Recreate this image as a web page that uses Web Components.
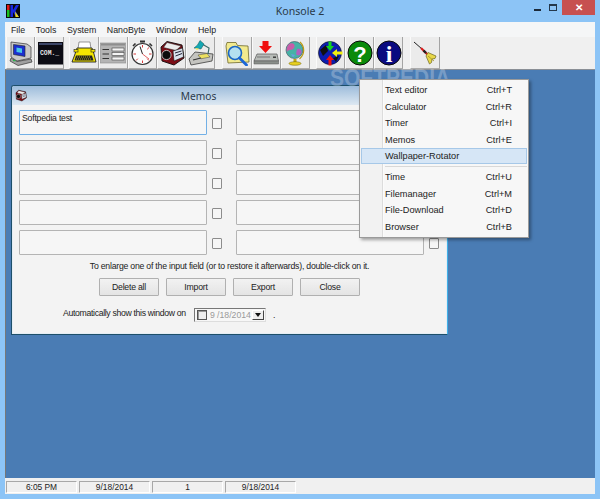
<!DOCTYPE html>
<html>
<head>
<meta charset="utf-8">
<title>Konsole 2</title>
<style>
    html, body { margin: 0; padding: 0; background: #8cc4f6; }
    body { font-family: "Liberation Sans", Arial, sans-serif; font-size: 9.2px; color: #222; }
</style>
</head>
<body>
<konsole-app>
    <tool-bar slot="toolbar">
        <tool-button icon="computer"></tool-button>
        <tool-button icon="com"></tool-button>
        <tool-gap size="5"></tool-gap>
        <tool-button icon="typewriter"></tool-button>
        <tool-button icon="form"></tool-button>
        <tool-button icon="stopwatch"></tool-button>
        <tool-button icon="memos"></tool-button>
        <tool-button icon="lamp"></tool-button>
        <tool-gap size="7"></tool-gap>
        <tool-button icon="folder"></tool-button>
        <tool-button icon="download"></tool-button>
        <tool-button icon="globe"></tool-button>
        <tool-gap size="6"></tool-gap>
        <tool-button icon="arrows"></tool-button>
        <tool-button icon="help"></tool-button>
        <tool-button icon="info"></tool-button>
        <tool-gap size="7"></tool-gap>
        <tool-button icon="dart"></tool-button>
    </tool-bar>

    <memo-window slot="desktop" heading="Memos">
        <memo-row first="Softpedia test" focused></memo-row>
        <memo-row></memo-row>
        <memo-row></memo-row>
        <memo-row></memo-row>
        <memo-row></memo-row>
    </memo-window>

    <context-menu slot="desktop">
        <menu-item shortcut="Ctrl+T">Text editor</menu-item>
        <menu-item shortcut="Ctrl+R">Calculator</menu-item>
        <menu-item shortcut="Ctrl+I">Timer</menu-item>
        <menu-item shortcut="Ctrl+E">Memos</menu-item>
        <menu-item active>Wallpaper-Rotator</menu-item>
        <menu-separator></menu-separator>
        <menu-item shortcut="Ctrl+U">Time</menu-item>
        <menu-item shortcut="Ctrl+M">Filemanager</menu-item>
        <menu-item shortcut="Ctrl+D">File-Download</menu-item>
        <menu-item shortcut="Ctrl+B">Browser</menu-item>
    </context-menu>

    <status-panel slot="status">6:05 PM</status-panel>
    <status-panel slot="status">9/18/2014</status-panel>
    <status-panel slot="status">1</status-panel>
    <status-panel slot="status">9/18/2014</status-panel>
</konsole-app>

<script>
const ICONS = {
    computer: `
        <path d="M3 2 L19 4 L23 7 L23 18 L9 21 L3 17 Z" fill="#c8c8c8" stroke="#333" stroke-width=".7"/>
        <path d="M5.5 4.5 L17 6 L17 16.5 L5.5 14.5 Z" fill="#1a2fd0" stroke="#222" stroke-width=".6"/>
        <path d="M8.5 7.5 L14 8.5 L14 13 L8.5 12 Z" fill="#47c6e8"/>
        <path d="M3 18 L9 21.5 L23 19 L24 22 L10 25.5 L2 21 Z" fill="#a0a0a0" stroke="#333" stroke-width=".7"/>
        <rect x="5" y="20" width="2.5" height="1.2" fill="#2bb54a"/>`,
    com: `
        <rect x="1" y="2" width="25" height="22.5" fill="#0c0c14"/>
        <rect x="2" y="3" width="23" height="2" fill="#3c4668"/>
        <text x="3" y="14.5" font-family="Liberation Mono, monospace" font-size="6.4" font-weight="700" fill="#e8e8e8">COM._</text>`,
    typewriter: `
        <path d="M8 2 L19 2 L20 9 L7 9 Z" fill="#fff" stroke="#555" stroke-width=".6"/>
        <path d="M6 8 L21 8 L23 14 L25 22 L1 22 L4 14 Z" fill="#f4e500" stroke="#222" stroke-width=".9"/>
        <rect x="3" y="9.5" width="4" height="2.5" fill="#f4e500" stroke="#222" stroke-width=".6"/>
        <rect x="20" y="9.5" width="4" height="2.5" fill="#f4e500" stroke="#222" stroke-width=".6"/>
        <path d="M5 15.5 L21 15.5 L22.5 20.5 L3.5 20.5 Z" fill="#222"/>
        <path d="M6 17 H20 M5 19 H21" stroke="#f4e500" stroke-width=".7" stroke-dasharray="1 1"/>`,
    form: `
        <rect x="0" y="3" width="26" height="20" fill="#b4b4b4" stroke="#8a8a8a" stroke-width=".6"/>
        <rect x="1" y="3.5" width="24" height="2" fill="#8e8e8e"/>
        <path d="M2.5 9.5 H9 M2.5 14 H9 M2.5 18.5 H9" stroke="#333" stroke-width="1.1"/>
        <rect x="12" y="8" width="12" height="3" fill="#f4f4f4" stroke="#444" stroke-width=".6"/>
        <rect x="12" y="12.5" width="12" height="3" fill="#f4f4f4" stroke="#444" stroke-width=".6"/>
        <rect x="12" y="17" width="12" height="3" fill="#f4f4f4" stroke="#444" stroke-width=".6"/>`,
    stopwatch: `
        <rect x="11" y="0.5" width="5" height="2" fill="#333"/>
        <rect x="12.5" y="2" width="2" height="2.5" fill="#777"/>
        <path d="M4 6 L6.5 3.5 M23 6 L20.5 3.5" stroke="#333" stroke-width="1.6"/>
        <circle cx="13.5" cy="14" r="10.5" fill="#fdfdfd" stroke="#333" stroke-width="1.2"/>
        <path d="M13.5 5 V7.5 M22.5 14 H20 M13.5 23 V20.5 M4.5 14 H7 M20 7.5 L18.2 9.3 M20 20.5 L18.2 18.7 M7 20.5 L8.8 18.7" stroke="#d83a3a" stroke-width="1"/>
        <path d="M13.5 14 L11 6.5" stroke="#222" stroke-width="1"/>
        <path d="M13.5 14 L20 19" stroke="#d83a3a" stroke-width=".8"/>`,
    memos: `
        <path d="M2 7 L8 1.5 L23 5 L25 18 L15 25 L3 21 Z" fill="#7c0d16" stroke="#120a0a" stroke-width=".9"/>
        <path d="M8 2.5 L22 6 L17 10.5 L4.5 7.5 Z" fill="#ececec" stroke="#222" stroke-width=".5"/>
        <circle cx="7.5" cy="15" r="4.6" fill="#0c0c0c" stroke="#e0e0e0" stroke-width=".8"/>
        <path d="M14 11 L23.5 8 L24.5 17 L15 21 Z" fill="#dde3ee" stroke="#111" stroke-width=".6"/>
        <path d="M16 13 L22.5 11 M16.5 16 L23 13.5" stroke="#223" stroke-width="1"/>`,
    lamp: `
        <path d="M1 19 L7 12 L25 14 L24 21 L3 25 Z" fill="#c4c4c0" stroke="#3c3c3c" stroke-width=".8"/>
        <path d="M10 15 L19 13.5 L22 17 L13 18.8 Z" fill="#ece060" stroke="#444" stroke-width=".5"/>
        <path d="M5 20 L13 18" stroke="#333" stroke-width="1.1"/>
        <path d="M20 14 L21 8 L14 4" fill="none" stroke="#3c6a6a" stroke-width="1.2"/>
        <path d="M12 0.5 L16 4 L13 9 L6 8 L9.5 5 Z" fill="#14a8b4" stroke="#155" stroke-width=".5"/>
        <path d="M7 8 L11 8.5 L9 10.5 Z" fill="#f4ea70"/>`,
    folder: `
        <path d="M2 6 L3 2.5 L12 2.5 L13.5 5.5 L24 6 L25 22 L4 23 Z" fill="#f2ea8e" stroke="#6f6a2c" stroke-width=".8"/>
        <circle cx="11" cy="13" r="6.5" fill="#b4e0f0" stroke="#1a66c4" stroke-width="1.6"/>
        <path d="M15.5 18 L22.5 25" stroke="#1a66d8" stroke-width="2.8" stroke-linecap="round"/>`,
    download: `
        <path d="M9.5 1 H15.5 V6 H19 L12.5 13 L6 6 H9.5 Z" fill="#f01010"/>
        <path d="M4 14 L24 14 L25.5 21 L1 21 Z" fill="#b8bcb8" stroke="#555" stroke-width=".7"/>
        <path d="M1 21 H25.5 V24 H1 Z" fill="#8a8e8a" stroke="#555" stroke-width=".5"/>
        <path d="M4 17 H17" stroke="#777" stroke-width="1"/>
        <rect x="20" y="16.5" width="3" height="1.4" fill="#333"/>`,
    globe: `
        <circle cx="12.5" cy="10" r="8.5" fill="#46b2a6" stroke="#3c4a5a" stroke-width=".6"/>
        <path d="M7 4 C11 2 14 5 12 8 C10 11 6 9 5 12 C4 9 5 6 7 4 Z" fill="#c85ca8"/>
        <path d="M15 9 C18.5 8 20 10 19.5 13 C18 16 15 16 14 14 Z" fill="#b060c0"/>
        <path d="M9 14 L13 15 L11 17.5 Z" fill="#68a0e0"/>
        <path d="M18 2 C23 7 23 14 17.5 19" fill="none" stroke="#b89c10" stroke-width="1.2"/>
        <rect x="11.5" y="19" width="3" height="3" fill="#c0a814"/>
        <ellipse cx="13" cy="23.5" rx="6" ry="1.8" fill="#e8d020" stroke="#6a5c08" stroke-width=".5"/>`,
    arrows: `
        <circle cx="13" cy="13" r="11.5" fill="#0c1cb0" stroke="#111" stroke-width=".6"/>
        <path d="M3 10 L9 5 L11 11 L6 16 Z" fill="#101010"/>
        <path d="M16 18 L22 16 L19 22 Z" fill="#101010"/>
        <path d="M11.5 1.5 H14.5 V6 H17 L13 11 L9 6 H11.5 Z" fill="#12d020"/>
        <path d="M25.5 11.5 V14.5 H20 V17 L15 13 L20 9 V11.5 Z" fill="#f2ee10"/>
        <path d="M11.5 25.5 H14.5 V20 H17 L13 15 L9 20 H11.5 Z" fill="#ee1010"/>`,
    help: `
        <circle cx="13" cy="13" r="12" fill="#0a8a0a" stroke="#0a0a0a" stroke-width="1"/>
        <text x="13" y="21.5" text-anchor="middle" font-family="Liberation Sans, sans-serif" font-size="22" font-weight="700" fill="#fff">?</text>`,
    info: `
        <circle cx="13" cy="13" r="12" fill="#0a0a80" stroke="#0a0a0a" stroke-width="1"/>
        <text x="13" y="22" text-anchor="middle" font-family="Liberation Serif, serif" font-size="24" font-weight="700" fill="#fff">i</text>`,
    dart: `
        <path d="M2 2 L10 9" stroke="#222" stroke-width="1"/>
        <path d="M9 8 L17 16" stroke="#d81818" stroke-width="2.2"/>
        <path d="M11.5 10.5 L14 13" stroke="#222" stroke-width="2.4"/>
        <path d="M16 12.5 L24 16 L23 18.5 L20 19 L19.5 22.5 L17.5 24 L14 16 Z" fill="#e8d848" stroke="#6a6420" stroke-width=".7"/>
        <path d="M16 16 L22 21" stroke="#a09020" stroke-width=".8"/>`
};

class KonsoleApp extends HTMLElement {
    constructor() {
        super();
        this.attachShadow({ mode: 'open' });
        this.shadowRoot.innerHTML = `
            <style>
                :host {
                    display: flex;
                    flex-direction: column;
                    box-sizing: border-box;
                    width: 600px;
                    height: 499px;
                    padding: 0 5px 5px;
                    background: #8cc4f6;
                    overflow: hidden;
                    font-family: "Liberation Sans", Arial, sans-serif;
                    font-size: 9.2px;
                    color: #222;
                }

                #title {
                    position: relative;
                    display: flex;
                    justify-content: center;
                    align-items: center;
                    height: 22px;
                    flex: none;
                    font-family: "Noto Sans", "Open Sans", sans-serif;
                    font-size: 10.6px;
                    color: #2a3a48;
                }

                #logo {
                    position: absolute;
                    left: 1px;
                    top: 4px;
                }

                #caption {
                    position: absolute;
                    top: 0;
                    right: 0;
                    display: flex;
                    align-items: flex-start;
                }

                #min, #max {
                    width: 16px;
                    height: 15px;
                    display: flex;
                    align-items: center;
                    justify-content: center;
                }

                #min i {
                    display: block;
                    width: 7px;
                    height: 2px;
                    margin-top: 4px;
                    background: #1c2a3a;
                }

                #max i {
                    display: block;
                    box-sizing: border-box;
                    width: 8px;
                    height: 7px;
                    border: 1px solid #24384c;
                    border-top-width: 2px;
                }

                #close {
                    width: 33px;
                    height: 15px;
                    margin-left: 1px;
                    background: #c75050;
                    color: #fff;
                    font: bold 10px "Liberation Sans", sans-serif;
                    display: flex;
                    align-items: center;
                    justify-content: center;
                }

                #menu {
                    display: flex;
                    gap: 10.6px;
                    height: 15px;
                    flex: none;
                    align-items: center;
                    padding-left: 6px;
                    background: #f5f6f7;
                    font-size: 8.8px;
                }

                #bar {
                    height: 32px;
                    flex: none;
                    background: #f0f0f0;
                    border-bottom: 0;
                }

                #desktop {
                    position: relative;
                    flex: 1;
                    border-left: 1px solid #777;
                    border-top: 1px solid #8a8f96;
                    background: #4a7cb4;
                }

                #watermark {
                    position: absolute;
                    left: 324px;
                    top: 1px;
                    font: bold 21px "Liberation Sans", sans-serif;
                    line-height: 14px;
                    transform: scaleY(1.1);
                    transform-origin: top left;
                    color: rgba(255, 255, 255, 0.26);
                    white-space: nowrap;
                    z-index: 2;
                }

                #status {
                    display: flex;
                    gap: 2px;
                    height: 15px;
                    flex: none;
                    align-items: flex-end;
                    padding: 0 0 1px 1px;
                    background: #f0f0f0;
                    font-size: 8.4px;
                }
            </style>
            <div id="title">
                <svg id="logo" width="14" height="14" viewBox="0 0 14 14">
                    <rect width="14" height="14" fill="#0a0a0a"/>
                    <rect x="1" y="1" width="2.5" height="5" fill="#e01818"/>
                    <rect x="1" y="6" width="2.5" height="7" fill="#18c020"/>
                    <path d="M4.5 1 H7 V6 L10 1 H13 L9.5 7 L13 13 H10 L7 8 V13 H4.5 Z" fill="#1828e0"/>
                    <path d="M9 7.5 L13 13 H9.5 Z" fill="#f0e010"/>
                </svg>
                <span>Konsole 2</span>
                <div id="caption">
                    <div id="min"><i></i></div>
                    <div id="max"><i></i></div>
                    <div id="close">&#10005;</div>
                </div>
            </div>
            <div id="menu">
                <span>File</span><span>Tools</span><span>System</span><span>NanoByte</span><span>Window</span><span>Help</span>
            </div>
            <div id="bar"><slot name="toolbar"></slot></div>
            <div id="desktop">
                <slot name="desktop"></slot>
                <div id="watermark">SOFTPEDIA</div>
            </div>
            <div id="status"><slot name="status"></slot></div>
        `;
    }
}

class ToolBar extends HTMLElement {
    constructor() {
        super();
        this.attachShadow({ mode: 'open' });
        this.shadowRoot.innerHTML = `
            <style>
                :host {
                    display: flex;
                    height: 32px;
                    padding-left: 1px;
                    box-sizing: border-box;
                    align-items: stretch;
                }
            </style>
            <slot></slot>
        `;
    }
}

class ToolGap extends HTMLElement {
    constructor() {
        super();
        this.attachShadow({ mode: 'open' });
        this.shadowRoot.innerHTML = `<style>:host { display: block; }</style>`;
    }

    connectedCallback() {
        this.style.width = this.getAttribute('size') + 'px';
    }
}

class ToolButton extends HTMLElement {
    constructor() {
        super();
        this.attachShadow({ mode: 'open' });
    }

    connectedCallback() {
        const icon = ICONS[this.getAttribute('icon')] || '';
        this.shadowRoot.innerHTML = `
            <style>
                :host {
                    display: flex;
                    align-items: center;
                    justify-content: center;
                    box-sizing: border-box;
                    width: 29.2px;
                    height: 32px;
                    background: #ebebeb;
                    border-right: 1px solid #a4a4a4;
                    border-bottom: 1px solid #ababab;
                    border-left: 1px solid #fafafa;
                    padding-top: 1px;
                }
            </style>
            <svg width="26" height="26" viewBox="0 0 26 26">${icon}</svg>
        `;
    }
}

class MemoWindow extends HTMLElement {
    constructor() {
        super();
        this.attachShadow({ mode: 'open' });
    }

    connectedCallback() {
        this.shadowRoot.innerHTML = `
            <style>
                :host {
                    position: absolute;
                    left: 5px;
                    top: 15px;
                    box-sizing: border-box;
                    width: 437px;
                    height: 250px;
                    display: flex;
                    flex-direction: column;
                    background: #f3f3f3;
                    border: 1px solid #1d4f6a;
                    border-right-color: #3fb0e8;
                    border-radius: 3px 3px 0 0;
                    box-shadow: inset 0 0 0 1px #e4edf5;
                    font-size: 8.7px;
                    letter-spacing: -0.22px;
                }

                header {
                    position: relative;
                    height: 19px;
                    flex: none;
                    display: flex;
                    align-items: center;
                    justify-content: center;
                    padding-right: 62px;
                    background: linear-gradient(#9dbcdb, #dde8f2);
                    font-family: "Noto Sans", "Open Sans", sans-serif;
                    font-size: 10.2px;
                    letter-spacing: 0;
                    color: #2a3a4c;
                    border-radius: 2px 2px 0 0;
                }

                header svg {
                    position: absolute;
                    left: 3px;
                    top: 3px;
                }

                #rows {
                    display: flex;
                    flex-direction: column;
                    gap: 5px;
                    padding: 5px 0 0 7px;
                }

                #hint {
                    margin-top: 5px;
                    text-align: center;
                    line-height: 12px;
                }

                #actions {
                    display: flex;
                    gap: 7px;
                    justify-content: center;
                    margin-top: 6px;
                }

                #auto {
                    display: flex;
                    align-items: flex-start;
                    margin-top: 11px;
                    padding-left: 51px;
                    line-height: 12px;
                    letter-spacing: -0.33px;
                }

                #picker {
                    display: flex;
                    align-items: center;
                    flex: none;
                    box-sizing: border-box;
                    width: 72px;
                    height: 14px;
                    margin-left: 8px;
                    margin-top: 1px;
                    background: #f7f7f7;
                    border: 1px solid;
                    border-color: #777 #ddd #ddd #777;
                    color: #9a9a9a;
                    padding-left: 2px;
                    white-space: nowrap;
                    letter-spacing: 0;
                }

                #check {
                    box-sizing: border-box;
                    flex: none;
                    width: 10px;
                    height: 10px;
                    border: 1px solid #555;
                    box-shadow: inset 1px 1px 0 #999;
                    background: #eee;
                    margin-right: 3px;
                }

                #drop {
                    margin-left: auto;
                    box-sizing: border-box;
                    flex: none;
                    width: 12px;
                    height: 10px;
                    margin-right: 1px;
                    background: #eee;
                    border: 1px solid;
                    border-color: #fff #444 #444 #fff;
                    display: flex;
                    align-items: center;
                    justify-content: center;
                }

                #drop i {
                    display: block;
                    width: 0;
                    height: 0;
                    border: 3px solid transparent;
                    border-top: 4px solid #111;
                    border-bottom: 0;
                }

                #dot {
                    margin-left: 7px;
                    margin-top: 2px;
                }
            </style>
            <header>
                <svg width="12" height="13" viewBox="0 0 26 26">${ICONS.memos}</svg>
                <span>${this.getAttribute('heading')}</span>
            </header>
            <div id="rows"><slot></slot></div>
            <div id="hint">To enlarge one of the input field (or to restore it afterwards), double-click on it.</div>
            <div id="actions">
                <memo-button>Delete all</memo-button>
                <memo-button>Import</memo-button>
                <memo-button>Export</memo-button>
                <memo-button>Close</memo-button>
            </div>
            <div id="auto">
                <span>Automatically show this window on</span>
                <div id="picker">
                    <div id="check"></div>
                    <span>9 /18/2014</span>
                    <div id="drop"><i></i></div>
                </div>
                <span id="dot">.</span>
            </div>
        `;
    }
}

class MemoRow extends HTMLElement {
    constructor() {
        super();
        this.attachShadow({ mode: 'open' });
    }

    connectedCallback() {
        const first = this.getAttribute('first') || '';
        const focused = this.hasAttribute('focused') ? 'focus' : '';
        this.shadowRoot.innerHTML = `
            <style>
                :host {
                    display: flex;
                    align-items: center;
                    height: 25px;
                }

                .field {
                    box-sizing: border-box;
                    flex: none;
                    width: 188px;
                    height: 25px;
                    padding: 2px 2px;
                    line-height: 11px;
                    background: #f6f6f6;
                    border: 1px solid #b4b4b4;
                    border-radius: 1px;
                }

                .field.focus {
                    border-color: #72b0e6;
                }

                .box {
                    box-sizing: border-box;
                    flex: none;
                    width: 10px;
                    height: 11px;
                    margin: 1px 14px 0 5px;
                    background: #f6f6f6;
                    border: 1px solid #8c8c8c;
                    border-radius: 1px;
                }

                .box:last-child {
                    margin-right: 0;
                }
            </style>
            <div class="field ${focused}">${first}</div>
            <div class="box"></div>
            <div class="field"></div>
            <div class="box"></div>
        `;
    }
}

class MemoButton extends HTMLElement {
    constructor() {
        super();
        this.attachShadow({ mode: 'open' });
        this.shadowRoot.innerHTML = `
            <style>
                :host {
                    display: flex;
                    align-items: center;
                    justify-content: center;
                    box-sizing: border-box;
                    width: 60px;
                    height: 18px;
                    background: linear-gradient(#f2f2f2, #e4e4e4);
                    border: 1px solid #b0b0b0;
                    border-radius: 1px;
                }
            </style>
            <slot></slot>
        `;
    }
}

class ContextMenu extends HTMLElement {
    constructor() {
        super();
        this.attachShadow({ mode: 'open' });
        this.shadowRoot.innerHTML = `
            <style>
                :host {
                    position: absolute;
                    left: 353px;
                    top: 9px;
                    z-index: 3;
                    box-sizing: border-box;
                    width: 170px;
                    height: 159px;
                    padding: 2px 1px;
                    display: flex;
                    flex-direction: column;
                    background: linear-gradient(to right, #f2f2f2 22px, #dcdcdc 22px, #dcdcdc 23px, #fff 23px, #f7f7f7 24px);
                    border: 1px solid #9a9a9a;
                    box-shadow: 2px 2px 3px rgba(0, 0, 0, 0.35);
                }
            </style>
            <slot></slot>
        `;
    }
}

class MenuItem extends HTMLElement {
    constructor() {
        super();
        this.attachShadow({ mode: 'open' });
    }

    connectedCallback() {
        const shortcut = this.getAttribute('shortcut') || '';
        this.shadowRoot.innerHTML = `
            <style>
                :host {
                    display: flex;
                    align-items: center;
                    justify-content: space-between;
                    box-sizing: border-box;
                    height: 16.5px;
                    padding: 0 15px 0 24px;
                }

                :host([active]) {
                    background: #d6e6f6;
                    box-shadow: inset 0 0 0 1px #a6c8e8;
                }
            </style>
            <span><slot></slot></span>
            <span>${shortcut}</span>
        `;
    }
}

class MenuSeparator extends HTMLElement {
    constructor() {
        super();
        this.attachShadow({ mode: 'open' });
        this.shadowRoot.innerHTML = `
            <style>
                :host {
                    display: block;
                    box-sizing: border-box;
                    height: 5px;
                    margin-left: 24px;
                    padding-top: 2px;
                }

                div {
                    height: 1px;
                    background: #d8d8d8;
                }
            </style>
            <div></div>
        `;
    }
}

class StatusPanel extends HTMLElement {
    constructor() {
        super();
        this.attachShadow({ mode: 'open' });
        this.shadowRoot.innerHTML = `
            <style>
                :host {
                    display: flex;
                    align-items: center;
                    justify-content: center;
                    box-sizing: border-box;
                    width: 71px;
                    height: 12px;
                    border-top: 1px solid #a8a8a8;
                    border-left: 1px solid #a8a8a8;
                    border-right: 1px solid #fff;
                    border-bottom: 1px solid #fff;
                }
            </style>
            <slot></slot>
        `;
    }
}

customElements.define('konsole-app', KonsoleApp);
customElements.define('tool-bar', ToolBar);
customElements.define('tool-gap', ToolGap);
customElements.define('tool-button', ToolButton);
customElements.define('memo-window', MemoWindow);
customElements.define('memo-row', MemoRow);
customElements.define('memo-button', MemoButton);
customElements.define('context-menu', ContextMenu);
customElements.define('menu-item', MenuItem);
customElements.define('menu-separator', MenuSeparator);
customElements.define('status-panel', StatusPanel);
</script>
</body>
</html>
